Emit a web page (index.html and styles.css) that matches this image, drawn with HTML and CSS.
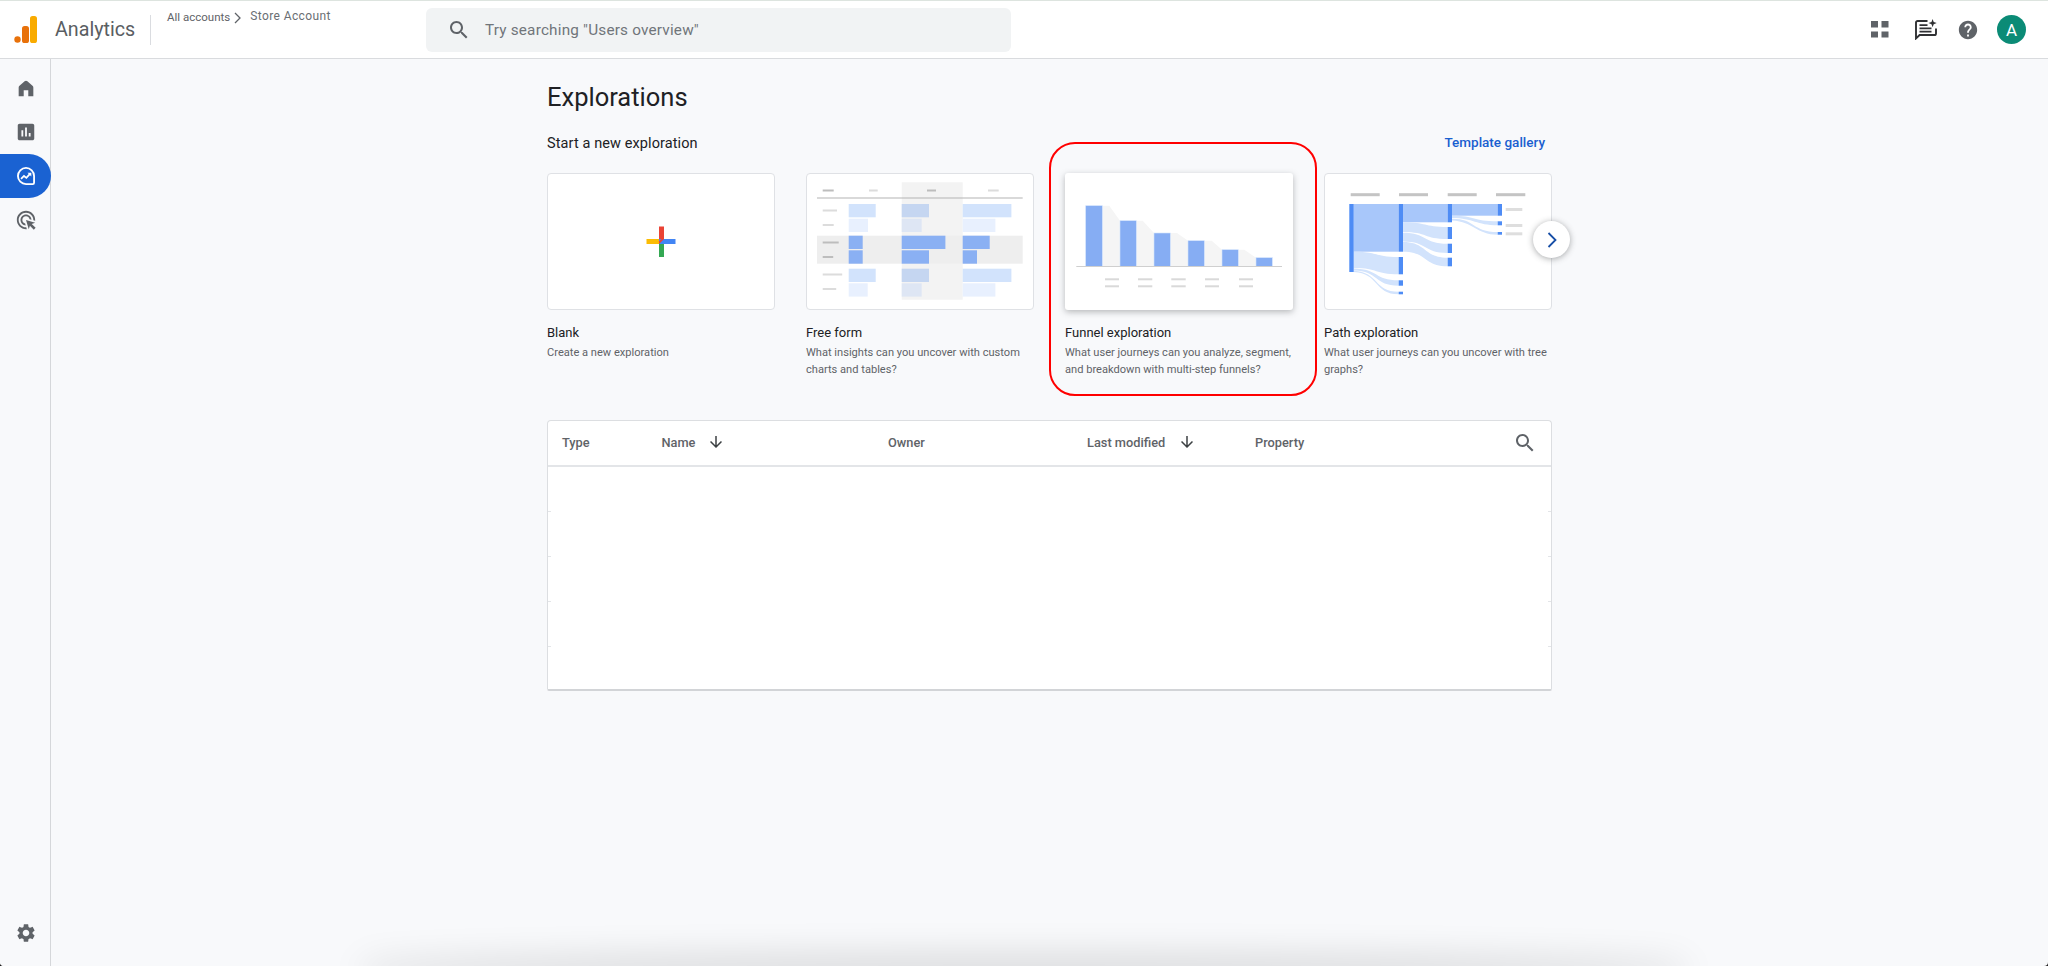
FILE: index.html
```html
<!DOCTYPE html>
<html lang="en">
<head>
<meta charset="utf-8">
<title>Analytics - Explorations</title>
<link rel="stylesheet" href="styles.css">
</head>
<body>
<div class="app">
  <header class="topbar">
    <svg class="logo" viewBox="0 0 24 28" aria-hidden="true">
      <circle cx="3.5" cy="23.5" r="3.2" fill="#e8710a"/>
      <rect x="8" y="10" width="7" height="17" rx="2.6" fill="#e8710a"/>
      <rect x="16" y="0" width="7" height="27" rx="2.6" fill="#f9ab00"/>
    </svg>
    <span class="brand">Analytics</span>
    <span class="divider"></span>
    <div class="crumbs">
      <span class="crumb-all">All accounts</span>
      <svg class="crumb-chevron" viewBox="0 0 7 12" aria-hidden="true"><path d="M1 1l5 5-5 5" fill="none" stroke="#5f6368" stroke-width="1.3"/></svg>
      <span class="crumb-name">Store Account</span>
    </div>
    <div class="search">
      <svg class="search-icon" viewBox="0 0 24 24" aria-hidden="true"><path d="M15.5 14h-.79l-.28-.27C15.41 12.59 16 11.11 16 9.5 16 5.91 13.09 3 9.5 3S3 5.91 3 9.5 5.91 16 9.5 16c1.61 0 3.09-.59 4.23-1.57l.27.28v.79l5 4.99L20.49 19l-4.99-5zm-6 0C7.01 14 5 11.99 5 9.5S7.01 5 9.5 5 14 7.01 14 9.5 11.99 14 9.5 14z"/></svg>
      <span class="search-text">Try searching "Users overview"</span>
    </div>
    <div class="top-actions">
      <svg class="act-grid" viewBox="0 0 18 17" aria-hidden="true"><rect width="7" height="6.5" x="0" y="0"/><rect width="7" height="6.5" x="10.5" y="0"/><rect width="7" height="6" x="0" y="10.5"/><rect width="7" height="6" x="10.5" y="10.5"/></svg>
      <svg class="act-chat" viewBox="0 0 22 21" aria-hidden="true">
        <path d="M12.5 2H2.6C1.7 2 1 2.7 1 3.6V19.4L4.6 16H19.4c.9 0 1.6-.7 1.6-1.6V9.5" fill="none" stroke="#303134" stroke-width="1.9"/>
        <path d="M4.5 6.2h8M4.5 9.4h12M4.5 12.6h12" fill="none" stroke="#303134" stroke-width="1.8"/>
        <path d="M17.6 0l1.1 3 3 1.1-3 1.1-1.1 3-1.1-3-3-1.1 3-1.1z" fill="#303134"/>
      </svg>
      <svg class="act-help" viewBox="0 0 24 24" aria-hidden="true"><path d="M12 2C6.48 2 2 6.48 2 12s4.48 10 10 10 10-4.48 10-10S17.52 2 12 2zm1 17h-2v-2h2v2zm2.07-7.75l-.9.92C13.45 12.9 13 13.5 13 15h-2v-.5c0-1.1.45-2.1 1.17-2.83l1.24-1.26c.37-.36.59-.86.59-1.41 0-1.1-.9-2-2-2s-2 .9-2 2H8c0-2.21 1.79-4 4-4s4 1.79 4 4c0 .88-.36 1.68-.93 2.25z"/></svg>
      <span class="avatar">A</span>
    </div>
  </header>

  <div class="body-row">
    <nav class="sidebar">
      <span class="nav-item"><svg class="nav-icon" viewBox="0 0 24 24" aria-hidden="true"><path d="M4 21V11.5c0-.8.3-1.4.9-1.9l5.6-5c.9-.8 2.1-.8 3 0l5.6 5c.6.5.9 1.1.9 1.9V21h-5.5v-6.5h-5V21z"/></svg></span>
      <span class="nav-item"><svg class="nav-icon" viewBox="0 0 24 24" aria-hidden="true"><path d="M19 3H5c-1.1 0-2 .9-2 2v14c0 1.1.9 2 2 2h14c1.1 0 2-.9 2-2V5c0-1.1-.9-2-2-2zM9 17H7v-7h2v7zm4 0h-2V7h2v10zm4 0h-2v-4h2v4z"/></svg></span>
      <span class="nav-item nav-active"><svg class="nav-icon" viewBox="0 0 24 24" aria-hidden="true">
        <path d="M12 3.2a8.8 8.8 0 1 0 0 17.6h7.4c.8 0 1.4-.6 1.4-1.4V12A8.8 8.8 0 0 0 12 3.2z" fill="none" stroke="#fff" stroke-width="2"/>
        <path d="M6.6 15.2l3.2-3.2 2.6 2 4.2-4.6" fill="none" stroke="#fff" stroke-width="1.9"/>
        <path d="M13.6 8.4h4.2v4.2z" fill="#fff"/>
      </svg></span>
      <span class="nav-item"><svg class="nav-icon" viewBox="0 0 24 24" aria-hidden="true"><path d="M11.71,17.99C8.53,17.84,6,15.22,6,12c0-3.31,2.69-6,6-6c3.22,0,5.84,2.53,5.99,5.71l-2.1-0.63C15.48,9.31,13.89,8,12,8 c-2.21,0-4,1.79-4,4c0,1.89,1.31,3.48,3.08,3.89L11.71,17.99z M22,12c0,0.3-0.01,0.6-0.04,0.9l-1.97-0.59C20,12.21,20,12.1,20,12 c0-4.42-3.58-8-8-8s-8,3.58-8,8s3.58,8,8,8c0.1,0,0.21,0,0.31-0.01l0.59,1.97C12.6,21.99,12.3,22,12,22C6.48,22,2,17.52,2,12 C2,6.48,6.48,2,12,2S22,6.48,22,12z M18.23,16.26L22,15l-10-3l3,10l1.26-3.77l4.27,4.27l1.98-1.98L18.23,16.26z"/></svg></span>
      <span class="nav-item nav-settings"><svg class="nav-icon" viewBox="0 0 24 24" aria-hidden="true"><path d="M19.14 12.94c.04-.3.06-.61.06-.94 0-.32-.02-.64-.07-.94l2.03-1.58c.18-.14.23-.41.12-.61l-1.92-3.32c-.12-.22-.37-.29-.59-.22l-2.39.96c-.5-.38-1.03-.7-1.62-.94l-.36-2.54c-.04-.24-.24-.41-.48-.41h-3.84c-.24 0-.43.17-.47.41l-.36 2.54c-.59.24-1.13.57-1.62.94l-2.39-.96c-.22-.08-.47 0-.59.22L2.74 8.87c-.12.21-.08.47.12.61l2.03 1.58c-.05.3-.09.63-.09.94s.02.64.07.94l-2.03 1.58c-.18.14-.23.41-.12.61l1.92 3.32c.12.22.37.29.59.22l2.39-.96c.5.38 1.03.7 1.62.94l.36 2.54c.05.24.24.41.48.41h3.84c.24 0 .44-.17.47-.41l.36-2.54c.59-.24 1.13-.56 1.62-.94l2.39.96c.22.08.47 0 .59-.22l1.92-3.32c.12-.22.07-.47-.12-.61l-2.01-1.58zM12 15.6c-1.98 0-3.6-1.62-3.6-3.6s1.62-3.6 3.6-3.6 3.6 1.62 3.6 3.6-1.62 3.6-3.6 3.6z"/></svg></span>
    </nav>

    <main class="content">
      <div class="page">
        <h1 class="page-title">Explorations</h1>
        <div class="section-head">
          <h2 class="section-title">Start a new exploration</h2>
          <a class="gallery-link">Template gallery</a>
        </div>

        <div class="cards">
          <article class="card">
            <div class="thumb">
              <svg class="thumb-art" viewBox="0 0 228 137" aria-hidden="true">
                <rect x="112" y="53.5" width="5" height="15" fill="#ea4335"/>
                <rect x="112" y="68.5" width="5" height="15.5" fill="#34a853"/>
                <rect x="99.5" y="66" width="13" height="5" fill="#fbbc04"/>
                <rect x="112" y="66" width="16.5" height="5" fill="#4285f4"/>
                <path d="M112 68.5l2.5-2.5 2.5 0-5 5z" fill="#ea4335"/>
              </svg>
            </div>
            <h3 class="card-title">Blank</h3>
            <p class="card-desc">Create a new exploration</p>
          </article>

          <article class="card">
            <div class="thumb">
              <svg class="thumb-art" viewBox="0 0 228 137" aria-hidden="true">
                <rect x="95.7" y="9.3" width="61" height="117.4" fill="#f3f3f3"/>
                <rect x="11" y="62.7" width="205.7" height="28" fill="#eeeeee"/>
                <rect x="11" y="24.5" width="205.7" height="1" fill="#b4b4b4"/>
                <g fill="#bdbdbd">
                  <rect x="16.7" y="16.5" width="11" height="2"/><rect x="121" y="16.5" width="9" height="2"/>
                  <rect x="16.7" y="68.5" width="16" height="2"/><rect x="16.7" y="83" width="10.5" height="2"/>
                </g>
                <g fill="#dcdcdc">
                  <rect x="63" y="16.5" width="8.7" height="2"/><rect x="182" y="16.5" width="10.7" height="2"/>
                  <rect x="16.7" y="36.5" width="14.3" height="2"/><rect x="16.7" y="51" width="11" height="2"/>
                  <rect x="16.7" y="100.5" width="19.5" height="2"/><rect x="16.7" y="115" width="13.5" height="2"/>
                </g>
                <g fill="#d2e3fc">
                  <rect x="42.7" y="31" width="27" height="13.3"/><rect x="156.7" y="31" width="48.7" height="13.3"/>
                  <rect x="42.7" y="95.7" width="27" height="13.3"/><rect x="156.7" y="95.7" width="48.7" height="13.3"/>
                </g>
                <g fill="#e8f0fe">
                  <rect x="42.7" y="45.7" width="19.3" height="13.3"/><rect x="156.7" y="45.7" width="32.7" height="13.3"/>
                  <rect x="42.7" y="110.3" width="19" height="13.3"/><rect x="156.7" y="110.3" width="32.7" height="13.3"/>
                </g>
                <g fill="#c5d6f1">
                  <rect x="95.7" y="31" width="27.3" height="13.3"/><rect x="95.7" y="95.7" width="27.3" height="13.3"/>
                </g>
                <g fill="#dee6f4">
                  <rect x="95.7" y="45.7" width="20" height="13.3"/><rect x="95.7" y="110.3" width="20" height="13.3"/>
                </g>
                <g fill="#8ab0f3">
                  <rect x="42.7" y="62.7" width="14" height="13.3"/><rect x="42.7" y="77.3" width="14" height="13.4"/>
                  <rect x="95.7" y="62.7" width="43.7" height="13.3"/><rect x="95.7" y="77.3" width="27.3" height="13.4"/>
                  <rect x="156.7" y="62.7" width="27" height="13.3"/><rect x="156.7" y="77.3" width="14.3" height="13.4"/>
                </g>
              </svg>
            </div>
            <h3 class="card-title">Free form</h3>
            <p class="card-desc">What insights can you uncover with custom charts and tables?</p>
          </article>

          <article class="card card-selected">
            <div class="thumb thumb-raised">
              <svg class="thumb-art" viewBox="0 0 228 137" aria-hidden="true">
                <g fill="#f5f5f5">
                  <path d="M37.3 32.7h7L55 47.7v45.6H37.3z"/>
                  <path d="M71.3 47.7h6.4L89 60v33.3H71.3z"/>
                  <path d="M105.3 60h6.7L123 67.7v25.6h-17.7z"/>
                  <path d="M139.3 67.7h7.4L157 76.7v16.6h-17.7z"/>
                  <path d="M173.3 76.7h6L191 84.7v8.6h-17.7z"/>
                </g>
                <g fill="#86adf3" stroke="#d2e3fc" stroke-width=".6">
                  <rect x="20.7" y="32.7" width="16.6" height="60.6"/>
                  <rect x="55" y="47.7" width="16.3" height="45.6"/>
                  <rect x="89" y="60" width="16.3" height="33.3"/>
                  <rect x="123" y="67.7" width="16.3" height="25.6"/>
                  <rect x="157" y="76.7" width="16.3" height="16.6"/>
                  <rect x="191" y="84.7" width="16.3" height="8.6"/>
                </g>
                <rect x="11.3" y="93" width="205.7" height="1" fill="#cfcfcf"/>
                <g fill="#d9d9d9">
                  <rect x="40" y="105.3" width="14" height="2"/><rect x="40" y="112.3" width="14" height="2"/>
                  <rect x="73" y="105.3" width="14.3" height="2"/><rect x="73" y="112.3" width="14.3" height="2"/>
                  <rect x="106.3" y="105.3" width="14.4" height="2"/><rect x="106.3" y="112.3" width="14.4" height="2"/>
                  <rect x="140" y="105.3" width="14" height="2"/><rect x="140" y="112.3" width="14" height="2"/>
                  <rect x="174" y="105.3" width="14" height="2"/><rect x="174" y="112.3" width="14" height="2"/>
                </g>
              </svg>
            </div>
            <h3 class="card-title">Funnel exploration</h3>
            <p class="card-desc">What user journeys can you analyze, segment, and breakdown with multi-step funnels?</p>
            <span class="highlight-ring"></span>
          </article>

          <article class="card">
            <div class="thumb">
              <svg class="thumb-art" viewBox="0 0 228 137" aria-hidden="true">
                <g fill="#c4c4c4">
                  <rect x="26.7" y="20.2" width="29" height="3"/><rect x="75" y="20.2" width="29" height="3"/>
                  <rect x="123.7" y="20.2" width="29" height="3"/><rect x="172" y="20.2" width="29.3" height="3"/>
                </g>
                <g fill="#dedede">
                  <rect x="181.7" y="35" width="16.6" height="3"/><rect x="181.7" y="51" width="16.6" height="3"/><rect x="181.7" y="59.3" width="16.6" height="3"/>
                </g>
                <g fill="#a8c7fa">
                  <rect x="29.7" y="31" width="45" height="47.7"/>
                  <rect x="79" y="31" width="44.7" height="18.3"/>
                  <rect x="128" y="31" width="45.7" height="11.7"/>
                </g>
                <g fill="#d2e3fc">
                  <path d="M29.7 78.7C55 78.7 50 84 74.7 84v17.3C50 101.3 55 95 29.7 95z"/>
                  <path d="M29.7 95.5C55 96 50 107.3 74.7 107.3v5.4C50 112.7 55 98 29.7 97.5z"/>
                  <path d="M29.7 97.7C55 99 50 118.7 74.7 118.7v2.6C50 121.3 55 100 29.7 99z"/>
                  <path d="M79 49.3c24 0 20 4.7 44.7 4.7v12C99 66 104 59 79 59z"/>
                  <path d="M79 59.7c24 0 20 11 44.7 11V80C99 80 104 68.5 79 68.5z"/>
                  <path d="M79 69c24 0 20 15.7 44.7 15.7v8.6C99 93.3 104 78.7 79 78.7z"/>
                  <path d="M128 42.7c24 0 20 5.6 45.7 5.6v4C152 52.3 150 45 128 45z"/>
                  <path d="M128 45.7c24 0 20 13.3 45.7 13.3v2.7C152 61.7 150 48.5 128 47.5z"/>
                </g>
                <g fill="#4e8cf5">
                  <rect x="25.3" y="31" width="4.4" height="68"/>
                  <rect x="74.7" y="31" width="4.3" height="47.7"/><rect x="74.7" y="84" width="4.3" height="17.3"/>
                  <rect x="74.7" y="107.3" width="4.3" height="5.4"/><rect x="74.7" y="118.7" width="4.3" height="2.6"/>
                  <rect x="123.7" y="31" width="4.3" height="18.3"/><rect x="123.7" y="54" width="4.3" height="12"/>
                  <rect x="123.7" y="70.7" width="4.3" height="9.3"/><rect x="123.7" y="84.7" width="4.3" height="8.6"/>
                  <rect x="173.7" y="31" width="4.3" height="11.7"/><rect x="173.7" y="48.3" width="4.3" height="4"/>
                  <rect x="173.7" y="59" width="4.3" height="2.7"/>
                </g>
              </svg>
            </div>
            <h3 class="card-title">Path exploration</h3>
            <p class="card-desc">What user journeys can you uncover with tree graphs?</p>
            <button class="next-btn" aria-label="Next"><svg viewBox="0 0 12 18" aria-hidden="true"><path d="M2.5 2l7 7-7 7" fill="none" stroke="#174ea6" stroke-width="1.8"/></svg></button>
          </article>
        </div>

        <section class="table">
          <div class="table-head">
            <span class="col col-type">Type</span>
            <span class="col col-name">Name<svg class="sort" viewBox="0 0 24 24" aria-hidden="true"><path d="M20 12l-1.41-1.41L13 16.17V4h-2v12.17l-5.58-5.59L4 12l8 8 8-8z"/></svg></span>
            <span class="col col-owner">Owner</span>
            <span class="col col-mod">Last modified<svg class="sort" viewBox="0 0 24 24" aria-hidden="true"><path d="M20 12l-1.41-1.41L13 16.17V4h-2v12.17l-5.58-5.59L4 12l8 8 8-8z"/></svg></span>
            <span class="col col-prop">Property</span>
            <svg class="table-search" viewBox="0 0 24 24" aria-hidden="true"><path d="M15.5 14h-.79l-.28-.27C15.41 12.59 16 11.11 16 9.5 16 5.91 13.09 3 9.5 3S3 5.91 3 9.5 5.91 16 9.5 16c1.61 0 3.09-.59 4.23-1.57l.27.28v.79l5 4.99L20.49 19l-4.99-5zm-6 0C7.01 14 5 11.99 5 9.5S7.01 5 9.5 5 14 7.01 14 9.5 11.99 14 9.5 14z"/></svg>
          </div>
          <div class="table-row"></div>
          <div class="table-row"></div>
          <div class="table-row"></div>
          <div class="table-row"></div>
          <div class="table-row table-row-last"></div>
        </section>
      </div>
    </main>
  </div>
  <div class="dock-shadow"></div>
</div>
</body>
</html>
```

FILE: styles.css
```css
* { box-sizing: border-box; }
html { background: #1f1f1f; }
body { margin: 0; font-family: Roboto, "Liberation Sans", sans-serif; color: #202124; }

.app {
  position: relative;
  width: 2048px;
  height: 966px;
  display: flex;
  flex-direction: column;
  overflow: hidden;
  background: #f8f9fb;
  border-radius: 0 0 4px 4px;
}

/* top bar */
.topbar {
  flex: 0 0 59px;
  display: flex;
  align-items: center;
  background: #fff;
  border-top: 1px solid #dde4df;
  border-bottom: 1px solid #d9dbde;
}
.logo { width: 24px; height: 28px; margin-left: 14px; flex: none; }
.brand { margin-left: 17px; font-size: 19.7px; color: #5a5e63; width: 80px; }
.divider { width: 1px; height: 30px; background: #dadce0; margin-left: 15px; }
.crumbs { flex: 0 0 275px; align-self: flex-start; display: flex; align-items: center; height: 16px; margin: 8px 0 0 0; padding-left: 16px; color: #5f6368; }
.crumb-all { font-size: 11.5px; }
.crumb-chevron { width: 7px; height: 12px; margin: 1px 0 0 4px; }
.crumb-name { font-size: 12px; letter-spacing: .4px; margin: -3px 0 0 9px; color: #6a6e73; }
.search {
  width: 585px;
  height: 44px;
  display: flex;
  align-items: center;
  background: #f1f3f4;
  border-radius: 6px;
}
.search-icon { width: 24px; height: 24px; margin-left: 21px; fill: #5f6368; }
.search-text { margin-left: 14px; font-size: 15.3px; letter-spacing: .2px; color: #70757a; }
.top-actions { margin-left: auto; display: flex; align-items: center; padding-right: 22px; }
.act-grid { width: 18px; height: 17px; fill: #5f6368; }
.act-chat { width: 22px; height: 21px; margin-left: 26px; }
.act-help { width: 22px; height: 22px; margin-left: 20px; fill: #5f6368; }
.avatar {
  width: 29px; height: 29px; margin-left: 18px;
  border-radius: 50%;
  background: #0b8b76;
  color: #fff;
  font-size: 17px;
  display: flex; align-items: center; justify-content: center;
}

/* layout */
.body-row { flex: 1; display: flex; min-height: 0; }
.sidebar {
  flex: 0 0 51px;
  display: flex;
  flex-direction: column;
  padding-top: 7px;
  border-right: 1px solid #d5d7da;
  background: #f8f9fb;
}
.nav-item { height: 44px; display: flex; align-items: center; padding-left: 15px; margin-right: -1px; }
.nav-icon { width: 22px; height: 22px; fill: #5f6368; }
.nav-active { background: #1a62d2; border-radius: 0 22px 22px 0; }
.nav-settings { margin-top: auto; margin-bottom: 11px; }

.content { flex: 1; min-width: 0; }
.page { width: 1005px; margin: 0 auto; }
.page-title { margin: 23px 0 0; height: 30px; line-height: 30px; font-size: 25.5px; font-weight: 400; color: #202124; }
.section-head { display: flex; justify-content: space-between; align-items: center; margin-top: 21px; height: 20px; padding-right: 7px; }
.section-title { margin: 0; font-size: 14.5px; font-weight: 400; letter-spacing: .1px; color: #202124; }
.gallery-link { font-size: 13.5px; font-weight: 500; color: #1a5fd0; margin-top: -2px; }

/* cards */
.cards { display: flex; gap: 31px; margin-top: 20px; }
.card { position: relative; flex: 0 0 228px; min-width: 0; height: 206px; }
.thumb { height: 137px; background: #fff; border: 1px solid #dfe1e5; border-radius: 4px; overflow: hidden; }
.thumb-raised { border: 0; border-radius: 3px; box-shadow: 0 2px 6px rgba(60,64,67,.35); }
.thumb-art { display: block; width: 228px; height: 137px; margin: -1px 0 0 -1px; }
.thumb-raised .thumb-art { margin: 0; }
.card-title { margin: 14px 0 0; height: 18px; line-height: 18px; font-size: 13px; font-weight: 400; color: #202124; }
.card-desc { margin: 3px -6px 0 0; font-size: 11.1px; line-height: 16.5px; color: #5f6368; }
.highlight-ring {
  position: absolute;
  left: -16px; top: -31px;
  width: 268px; height: 254px;
  border: 2px solid #f00;
  border-radius: 26px;
}
.next-btn {
  position: absolute;
  left: 209px; top: 48px;
  width: 37px; height: 37px;
  padding: 0;
  display: flex; align-items: center; justify-content: center;
  background: #fff;
  border: 0;
  border-radius: 50%;
  box-shadow: 0 1px 6px rgba(60,64,67,.45);
}
.next-btn svg { width: 12px; height: 18px; }

/* table */
.table { margin-top: 41px; background: #fff; border: 1px solid #dcdee1; border-bottom: 2px solid #d2d4d7; border-radius: 4px 4px 2px 2px; height: 271px; overflow: hidden; }
.table-head { display: flex; align-items: center; height: 46px; border-bottom: 2px solid #e3e5e8; }
.col { display: flex; align-items: center; height: 18px; margin-bottom: 2px; font-size: 12.8px; font-weight: 500; color: #5f6368; }
.col-type { width: 99.5px; margin-left: 14px; }
.col-name { width: 226.5px; }
.col-owner { width: 199px; }
.col-mod { width: 168px; }
.col-prop { flex: 1; }
.sort { width: 18px; height: 18px; margin-left: 12px; fill: #3c4043; }
.col-mod .sort { margin-left: 13px; }
.table-search { width: 24px; height: 24px; margin-right: 14px; fill: #5f6368; }
.table-row {
  height: 45px;
  background:
    linear-gradient(#e3e5e8, #e3e5e8) left bottom / 3px 1px no-repeat,
    linear-gradient(#e3e5e8, #e3e5e8) right bottom / 3px 1px no-repeat;
}
.table-row-last { background: none; }

/* soft shadow along the bottom of the window */
.dock-shadow {
  position: absolute;
  left: 372px; right: 372px; bottom: -8px;
  height: 8px;
  border-radius: 50%;
  box-shadow: 0 0 34px 12px rgba(0,0,0,.13);
}
```
